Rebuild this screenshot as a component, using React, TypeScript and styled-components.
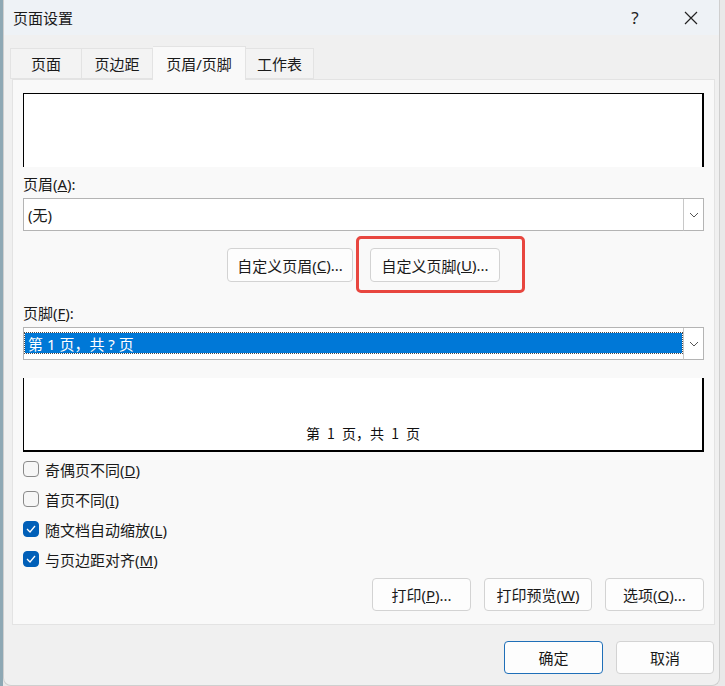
import React from 'react'
import styled, { createGlobalStyle } from 'styled-components'

const GlobalStyle = createGlobalStyle`
  html, body {
    margin: 0;
    padding: 0;
    height: 100%;
  }
  body {
    font-family: "Noto Sans", "Noto Sans CJK SC", sans-serif;
    color: #1a1a1a;
    overflow: hidden;
  }
`

const Desktop = styled.div`
  display: flex;
  width: 725px;
  height: 686px;
  background: linear-gradient(to right, #8ea8b4 0 3px, #e9e9e9 3px);
  padding-left: 3px;
  box-sizing: border-box;
`

const Dialog = styled.div`
  width: 717px;
  height: 686px;
  box-sizing: border-box;
  display: flex;
  flex-direction: column;
  background: #f0f0f0;
  border: 1px solid #cfcfcf;
  border-top: none;
  border-radius: 0 0 8px 8px;
  overflow: hidden;
`

const TitleBar = styled.div`
  height: 35px;
  display: flex;
  align-items: center;
  padding-left: 9px;
  background: #eef2f6;
  font-size: 15px;
`

const TitleText = styled.span`
  flex: 1;
`

const CaptionButton = styled.span`
  width: 56px;
  display: flex;
  justify-content: center;
  align-items: center;
  font-size: 17px;
  color: #222;
`

const Body = styled.div`
  flex: 1;
  display: flex;
  flex-direction: column;
  padding: 0 4px 0 8px;
`

const TabStrip = styled.div`
  display: flex;
  align-items: flex-end;
  margin: 11px 0 0 -2px;
  height: 33px;
  position: relative;
  z-index: 1;
`

const Tab = styled.div<{ $active?: boolean; $w: number }>`
  width: ${(p) => p.$w}px;
  height: ${(p) => (p.$active ? 34 : 31)}px;
  margin-bottom: ${(p) => (p.$active ? -1 : 0)}px;
  box-sizing: border-box;
  display: flex;
  align-items: center;
  justify-content: center;
  font-size: 15px;
  background: ${(p) => (p.$active ? '#f9f9f9' : '#f3f3f3')};
  border: 1px solid #e3e3e3;
  border-bottom: ${(p) => (p.$active ? 'none' : '1px solid #e3e3e3')};
  & + & {
    border-left: none;
  }
`

const Panel = styled.div`
  height: 546px;
  box-sizing: border-box;
  background: #f9f9f9;
  border: 1px solid #e3e3e3;
  padding: 13px 10px 0 10px;
  display: flex;
  flex-direction: column;
`

const Preview = styled.div<{ $edge: 'top' | 'bottom' }>`
  height: 74px;
  box-sizing: border-box;
  background: #fff;
  border-left: 1px solid #000;
  border-right: 2px solid #000;
  border-top: ${(p) => (p.$edge === 'top' ? '1.5px solid #000' : 'none')};
  border-bottom: ${(p) => (p.$edge === 'bottom' ? '2px solid #000' : 'none')};
  display: flex;
  align-items: flex-end;
  justify-content: center;
  padding-bottom: 7px;
`

const PreviewText = styled.span`
  font-family: "Noto Sans CJK SC", sans-serif;
  font-size: 14px;
  word-spacing: 4px;
  color: #111;
`

const FieldLabel = styled.div<{ $top: number }>`
  margin-top: ${(p) => p.$top}px;
  height: 20px;
  line-height: 20px;
  font-size: 15px;
`

const Combo = styled.div`
  margin-top: 4px;
  height: 33px;
  box-sizing: border-box;
  background: #fff;
  border: 1px solid #b4b4b4;
  display: flex;
  align-items: stretch;
`

const ComboValue = styled.div<{ $selected?: boolean }>`
  flex: 1;
  display: flex;
  align-items: center;
  font-size: 15px;
  padding-left: ${(p) => (p.$selected ? 3 : 4)}px;
  margin: ${(p) => (p.$selected ? '5px 1px 6px 1px' : '0')};
  background: ${(p) => (p.$selected ? '#0078d7' : 'transparent')};
  color: ${(p) => (p.$selected ? '#fff' : '#1a1a1a')};
  outline: ${(p) => (p.$selected ? '1px dotted #4a4a4a' : 'none')};
`

const DropButton = styled.div`
  width: 21px;
  box-sizing: border-box;
  border-left: 1px solid #c8c8c8;
  margin: 0 -1px -1px 0;
  border-right: 1px solid #b4b4b4;
  border-bottom: 1px solid #b4b4b4;
  background: #fff;
  display: flex;
  align-items: center;
  justify-content: center;
`

const ButtonRow = styled.div<{ $top: number; $align: 'center' | 'flex-end' }>`
  margin-top: ${(p) => p.$top}px;
  display: flex;
  justify-content: ${(p) => p.$align};
  gap: 13px;
`

const Button = styled.button<{ $w: number; $primary?: boolean; $h?: number }>`
  width: ${(p) => p.$w}px;
  height: ${(p) => p.$h ?? 33}px;
  box-sizing: border-box;
  padding: 0;
  font-family: inherit;
  font-size: 15px;
  color: #1a1a1a;
  background: #fdfdfd;
  border: 1px solid ${(p) => (p.$primary ? '#1f6fb8' : '#d3d3d3')};
  border-radius: 4px;
  display: flex;
  align-items: center;
  justify-content: center;
`

const Highlighted = styled.div`
  position: relative;
  margin-left: 4px;
`

const HighlightFrame = styled.div`
  position: absolute;
  left: -14px;
  top: -12px;
  right: -25px;
  bottom: -11px;
  border: 3px solid #e8463f;
  border-radius: 5px;
  pointer-events: none;
`

const Checks = styled.div`
  margin-top: 2px;
  display: flex;
  flex-direction: column;
`

const CheckRow = styled.label`
  height: 30px;
  display: flex;
  align-items: center;
  gap: 6px;
  font-size: 15px;
`

const Box = styled.span<{ $on: boolean }>`
  width: 16px;
  height: 16px;
  box-sizing: border-box;
  border-radius: 4px;
  background: ${(p) => (p.$on ? '#005fb8' : '#f6f6f6')};
  border: 1px solid ${(p) => (p.$on ? '#005fb8' : '#8a8a8a')};
  display: flex;
  align-items: center;
  justify-content: center;
`

const DialogFooter = styled.div`
  margin-top: 16px;
  display: flex;
  justify-content: flex-end;
  gap: 13px;
  padding-right: 1px;
`

const Chevron = () => (
  <svg width="10" height="6" viewBox="0 0 10 6">
    <polyline points="1,1 5,5 9,1" fill="none" stroke="#555" strokeWidth="1" />
  </svg>
)

const CloseIcon = () => (
  <svg width="14" height="14" viewBox="0 0 14 14">
    <path d="M1 1 L13 13 M13 1 L1 13" stroke="#222" strokeWidth="1.2" />
  </svg>
)

const Check = () => (
  <svg width="10" height="8" viewBox="0 0 10 8">
    <polyline points="1,4 4,7 9,1" fill="none" stroke="#fff" strokeWidth="1.3" />
  </svg>
)

const CheckItem = ({ on, children }: { on: boolean; children: React.ReactNode }) => (
  <CheckRow>
    <Box $on={on}>{on && <Check />}</Box>
    <span>{children}</span>
  </CheckRow>
)

const tabs = [
  { label: '页面', w: 72 },
  { label: '页边距', w: 71 },
  { label: '页眉/页脚', w: 93, active: true },
  { label: '工作表', w: 68 },
]

export default function App() {
  return (
    <>
      <GlobalStyle />
      <Desktop>
        <Dialog>
          <TitleBar>
            <TitleText>页面设置</TitleText>
            <CaptionButton>?</CaptionButton>
            <CaptionButton>
              <CloseIcon />
            </CaptionButton>
          </TitleBar>
          <Body>
            <TabStrip>
              {tabs.map((t) => (
                <Tab key={t.label} $w={t.w} $active={t.active}>
                  {t.label}
                </Tab>
              ))}
            </TabStrip>
            <Panel>
              <Preview $edge="top" />
              <FieldLabel $top={7}>
                页眉(<u>A</u>):
              </FieldLabel>
              <Combo>
                <ComboValue>(无)</ComboValue>
                <DropButton>
                  <Chevron />
                </DropButton>
              </Combo>
              <ButtonRow $top={17} $align="center">
                <Button $w={126} $h={34}>
                  自定义页眉(<u>C</u>)...
                </Button>
                <Highlighted>
                  <Button $w={130} $h={34}>
                    自定义页脚(<u>U</u>)...
                  </Button>
                  <HighlightFrame />
                </Highlighted>
              </ButtonRow>
              <FieldLabel $top={21}>
                页脚(<u>F</u>):
              </FieldLabel>
              <Combo>
                <ComboValue $selected>第 1 页，共 ? 页</ComboValue>
                <DropButton>
                  <Chevron />
                </DropButton>
              </Combo>
              <div style={{ height: 18 }} />
              <Preview $edge="bottom">
                <PreviewText>第 1 页，共 1 页</PreviewText>
              </Preview>
              <Checks>
                <CheckItem on={false}>
                  奇偶页不同(<u>D</u>)
                </CheckItem>
                <CheckItem on={false}>
                  首页不同(<u>I</u>)
                </CheckItem>
                <CheckItem on>
                  随文档自动缩放(<u>L</u>)
                </CheckItem>
                <CheckItem on>
                  与页边距对齐(<u>M</u>)
                </CheckItem>
              </Checks>
              <ButtonRow $top={4} $align="flex-end">
                <Button $w={99}>
                  打印(<u>P</u>)...
                </Button>
                <Button $w={108}>
                  打印预览(<u>W</u>)
                </Button>
                <Button $w={99}>
                  选项(<u>O</u>)...
                </Button>
              </ButtonRow>
            </Panel>
            <DialogFooter>
              <Button $w={99} $primary>
                确定
              </Button>
              <Button $w={98}>取消</Button>
            </DialogFooter>
          </Body>
        </Dialog>
      </Desktop>
    </>
  )
}
